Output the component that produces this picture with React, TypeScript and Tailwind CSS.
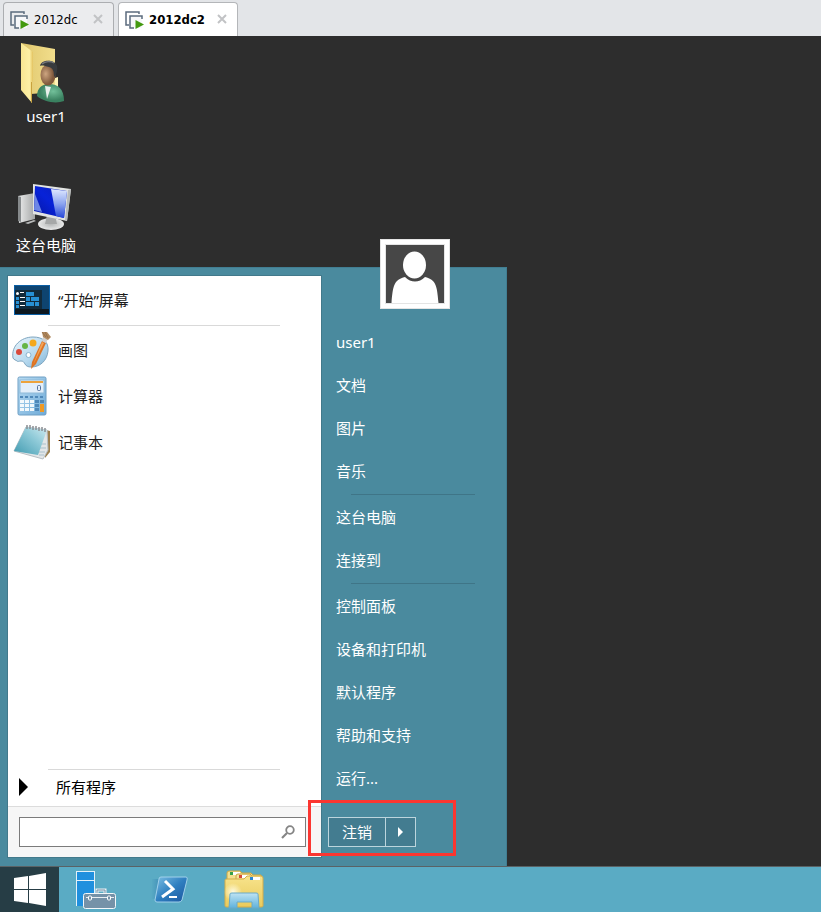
import type { ReactNode } from "react";

const UI = "font-['Noto_Sans','Noto_Sans_CJK_SC',sans-serif]";

function VmIcon() {
  return (
    <svg width="20" height="18" viewBox="0 0 20 18" fill="none">
      <path d="M4 14H1V1h13v2" stroke="#5b6b7d" strokeWidth="1.500" />
      <rect x="5" y="5" width="12" height="12" fill="#f7f8fa" />
      <path d="M9 17H5V5h12v3" stroke="#5b6b7d" strokeWidth="1.500" />
      <path d="M10.500 9v9l8.500-4.500z" fill="#43990f" />
    </svg>
  );
}

function Tab({ label, active }: { label: string; active?: boolean }) {
  return (
    <div
      className={
        active
          ? "flex w-[120px] items-center rounded-t border border-b-0 border-[#b4b6b9] bg-white pl-1.5 text-black"
          : "flex w-[111px] items-center rounded-t border border-b-0 border-[#acaeb1] bg-[#ebecee] pl-1.5 text-black"
      }
    >
      <button className="flex flex-1 items-center gap-1">
        <VmIcon />
        <span className={active ? "text-[13px] leading-4 font-bold" : "text-[13px] leading-4"}>{label}</span>
      </button>
      <button aria-label={"Close " + label} className="mr-2.5 mb-0.5 flex">
        <svg width="10" height="10" viewBox="0 0 10 10">
          <path d="M1 1l8 8M9 1l-8 8" stroke="#c2c3c5" strokeWidth="2" />
        </svg>
      </button>
    </div>
  );
}

function UserFolderIcon() {
  return (
    <svg width="50" height="62" viewBox="3 0 50 62">
      <defs>
        <linearGradient id="uf1" x1="0" x2="1">
          <stop offset="0" stopColor="#d8bf68" />
          <stop offset=".35" stopColor="#e6cf78" />
          <stop offset="1" stopColor="#f2de8c" />
        </linearGradient>
        <linearGradient id="uf2" x1="0" x2="1">
          <stop offset="0" stopColor="#f8e692" />
          <stop offset=".7" stopColor="#fdf0a6" />
          <stop offset="1" stopColor="#e3c25f" />
        </linearGradient>
        <radialGradient id="uf3" cx=".35" cy=".45">
          <stop offset="0" stopColor="#cda580" />
          <stop offset="1" stopColor="#80593c" />
        </radialGradient>
        <radialGradient id="uf4" cx=".6" cy=".4">
          <stop offset="0" stopColor="#72c09a" />
          <stop offset="1" stopColor="#3a8160" />
        </radialGradient>
      </defs>
      <path d="M3 1l34 6v43l-24 2z" fill="url(#uf1)" />
      <path d="M37 36l3-1v14h-3z" fill="#fff3b8" />
      <path d="M3 1l12 9v29l-1 1v21L3 48z" fill="url(#uf2)" />
      <path d="M13 40l1 0v21l-1-1z" fill="#c9a23e" />
      <path d="M19 54c0-8 5-12 12-12 9 0 15 5 15 17-8 3-20 1-27-5z" fill="url(#uf4)" />
      <path d="M27 44l6 1-4 12z" fill="#e8efec" />
      <ellipse cx="30" cy="33" rx="7.500" ry="10.500" fill="url(#uf3)" />
      <path d="M22 24c1-7 15-7 17 0 1 4-1 10-3 11 0-6-1-9-5-10-4-1-7-2-9-1z" fill="#383b3e" />
      <path d="M24 22c3-3 9-3 12-1" stroke="#777a7d" strokeWidth="1.500" fill="none" />
    </svg>
  );
}

function ComputerIcon() {
  return (
    <svg width="56" height="48" viewBox="1 0 56 48">
      <defs>
        <linearGradient id="pc1" x1="0" x2="1" y1="1" y2="0">
          <stop offset="0" stopColor="#0515a0" />
          <stop offset=".5" stopColor="#0722d8" />
          <stop offset="1" stopColor="#0a1fb8" />
        </linearGradient>
        <linearGradient id="pc2" x1="0" x2="0" y1="0" y2="1">
          <stop offset="0" stopColor="#dfe9ff" />
          <stop offset=".5" stopColor="#8ea6f0" />
          <stop offset="1" stopColor="#2546d8" />
        </linearGradient>
        <linearGradient id="pc3" x1="0" x2="1">
          <stop offset="0" stopColor="#eceded" />
          <stop offset="1" stopColor="#a4a6a6" />
        </linearGradient>
        <radialGradient id="pc4">
          <stop offset="0" stopColor="#b4b6b6" />
          <stop offset="1" stopColor="#e8e9e9" />
        </radialGradient>
      </defs>
      <path d="M1 13l17-3v26L2 40z" fill="url(#pc3)" />
      <path d="M1 13l3 1v25l-3-1z" fill="#868a8c" />
      <path d="M8 40l9-3 2 1-8 3z" fill="#b8baba" />
      <ellipse cx="34" cy="41" rx="13" ry="6" fill="url(#pc4)" />
      <path d="M28 41l2-9h8l2 9z" fill="#a6a8a8" />
      <path d="M16 1l38 5-4 32-34-7z" fill="#e2e4e2" />
      <path d="M51 7l3-1-4 32-2-1z" fill="#b7baba" />
      <path d="M18 3l32 5-3 27-30-7z" fill="url(#pc1)" />
      <path d="M34 6l16 2-3 27-8-2z" fill="url(#pc2)" />
      <path d="M18 11l7 18-8-2z" fill="#6d86e6" />
    </svg>
  );
}

function StartScreenIcon() {
  return (
    <svg width="36" height="30" viewBox="0 0 36 30">
      <rect width="36" height="30" fill="#0b5fa5" />
      <rect x="1" y="1" width="34" height="28" fill="#0e4470" />
      <rect x="1" y="5" width="27" height="20" fill="#122b3c" />
      <rect x="1" y="24" width="34" height="5" fill="#0d1820" />
      <circle cx="3.500" cy="8.500" r="1.500" fill="#fff" />
      <path d="M2 12h3v3H2zM2 16h3v3H2zM2 20h3v3H2zM12 7h8v4h-8zM12 12h4v4h-4zM17 12h8v4h-8zM12 17h8v4h-8zM21 17h4v4h-4z" fill="#2790d4" />
      <path d="M6 7h4v1H6zM6 12h5v1H6zM6 16h5v1H6zM6 20h5v1H6z" fill="#fff" />
    </svg>
  );
}

function PaintIcon() {
  return (
    <svg width="40" height="38" viewBox="0 0 40 38">
      <defs>
        <linearGradient id="pa1" x1="0" x2="1" y1="0" y2="1">
          <stop offset="0" stopColor="#eaf5fc" />
          <stop offset=".6" stopColor="#b5d8ee" />
          <stop offset="1" stopColor="#80b4d6" />
        </linearGradient>
      </defs>
      <path d="M1 27C-1 15 9 6 21 6c10 0 16 5 15 14-1 10-8 16-17 16-3 0-5-1-6-3s-2-3-4-3-3 1-4 0-3-1-4-3z" fill="url(#pa1)" stroke="#7fa6c0" />
      <circle cx="16.500" cy="24" r="2.500" fill="#fff" stroke="#8ab4cf" />
      <circle cx="7" cy="21" r="3" fill="#d94a3d" />
      <circle cx="13" cy="15" r="3" fill="#65b545" />
      <circle cx="21" cy="12" r="3.500" fill="#f5a81c" />
      <path d="M30 10l4 2-10 21-5 5 1-7z" fill="#dd7424" />
      <path d="M30 11l2 1-11 22z" fill="#f3a356" />
      <path d="M30 10l1-4 5 2-2 4z" fill="#cfd0d0" />
      <path d="M30 1l5 0 4 5-3 3-5-3z" fill="#b18a60" />
      <path d="M30 1l4 5M33 1l3 6" stroke="#8b6540" strokeWidth=".7" />
    </svg>
  );
}

function CalculatorIcon() {
  const keys = [0, 1, 2, 3, 4];
  return (
    <svg width="30" height="40" viewBox="0 0 30 40">
      <defs>
        <linearGradient id="ca1" x1="0" x2="1" y1="0" y2="1">
          <stop offset="0" stopColor="#b8dbf2" />
          <stop offset="1" stopColor="#6fabd8" />
        </linearGradient>
      </defs>
      <rect x="1" y="1" width="28" height="38" rx="1.500" fill="url(#ca1)" stroke="#6f9fc4" />
      <rect x="3" y="4" width="24" height="13" fill="#e3effa" stroke="#8db9d8" />
      <rect x="4" y="5" width="22" height="2" fill="#eda33b" />
      <rect x="20.500" y="9.500" width="3" height="5" rx="1" fill="none" stroke="#55719c" />
      {keys.map((k) => (
        <g key={k}>
          <rect x={3 + k * 5} y="20" width="3" height="2" fill="#4f88b8" />
          <rect x={3 + k * 5} y="24" width="4" height="3" fill={k < 3 ? "#f2f8fc" : "#4f88b8"} />
          <rect x={3 + k * 5} y="28" width="4" height="3" fill={k < 3 ? "#f2f8fc" : "#4f88b8"} />
          <rect x={3 + k * 5} y="32" width="4" height="3" fill={k < 3 ? "#f2f8fc" : "#4f88b8"} />
        </g>
      ))}
      <rect x="23" y="28" width="4" height="8" fill="#f09a24" />
    </svg>
  );
}

function NotepadIcon() {
  return (
    <svg width="38" height="36" viewBox="0 0 38 36">
      <defs>
        <linearGradient id="no1" x1="0" x2="1" y1="1" y2="0">
          <stop offset="0" stopColor="#3f9ab0" />
          <stop offset=".6" stopColor="#8fcad8" />
          <stop offset="1" stopColor="#cfeaf0" />
        </linearGradient>
      </defs>
      <path d="M33 6l4 1v21l-5 6z" fill="#9c8050" />
      <path d="M13 3l21 3 1 20-5 9L1 27z" fill="#e2e6e8" stroke="#b8bfc4" />
      <path d="M28 20l5 0M27 24l6 0M26 28l6 0M26 31l5 0" stroke="#a9c0cc" />
      <path d="M13 3l21 3-9 25L1 27z" fill="url(#no1)" />
      <path d="M14 1v4M17 1v4M20 2v4M23 2v4M26 3v4M29 3v4M32 4v4" stroke="#8a8f94" strokeWidth="1.500" />
    </svg>
  );
}

function ServerManagerIcon() {
  return (
    <svg width="40" height="40" viewBox="0 0 40 40">
      <path d="M0 1h19v35H0z" fill="#e4f1f8" />
      <path d="M1 2h17v8H1zM1 11h17v25H1z" fill="#2090de" />
      <path d="M21 24v-4h8v4" fill="none" stroke="#e9f0f4" strokeWidth="3" />
      <path d="M21 24v-4h8v4" fill="none" stroke="#7592a8" />
      <rect x="7.500" y="23.500" width="32" height="15" rx="2" fill="#7592a8" stroke="#f3f7f9" />
      <path d="M10 27.500h28" stroke="#e8eef2" />
      <rect x="12.500" y="26" width="3" height="4" rx="1" fill="#7592a8" stroke="#fff" />
      <rect x="31.500" y="26" width="3" height="4" rx="1" fill="#7592a8" stroke="#fff" />
    </svg>
  );
}

function PowerShellIcon() {
  return (
    <svg width="38" height="28" viewBox="0 0 38 28">
      <defs>
        <linearGradient id="ps1" x1="0" x2="1" y1="0" y2="1">
          <stop offset="0" stopColor="#7cc0e4" />
          <stop offset=".5" stopColor="#2f7fc0" />
          <stop offset="1" stopColor="#1c559e" />
        </linearGradient>
        <linearGradient id="ps2" x1="0" x2="1">
          <stop offset="0" stopColor="#3f8fb8" stopOpacity="0" />
          <stop offset="1" stopColor="#3a86b4" />
        </linearGradient>
      </defs>
      <path d="M1 3h10L7 23H0z" fill="url(#ps2)" />
      <path d="M10 1h25q2 0 1 3l-5 20q-1 2-3 2H6q-2 0-2-2L8 3q0-2 2-2z" fill="url(#ps1)" stroke="#9fd0ea" />
      <path d="M14 5l8 8-11 8" fill="none" stroke="#fff" strokeWidth="3" />
      <path d="M18 21h8" stroke="#fff" strokeWidth="2" />
    </svg>
  );
}

function ExplorerIcon() {
  return (
    <svg width="40" height="40" viewBox="0 0 40 40">
      <defs>
        <linearGradient id="ex1" x1="0" x2="0" y1="0" y2="1">
          <stop offset="0" stopColor="#f7e38c" />
          <stop offset="1" stopColor="#eacb5c" />
        </linearGradient>
        <radialGradient id="ex2">
          <stop offset="0" stopColor="#fffbe0" />
          <stop offset="1" stopColor="#fffbe0" stopOpacity="0" />
        </radialGradient>
        <linearGradient id="ex3" x1="0" x2="0" y1="0" y2="1">
          <stop offset="0" stopColor="#bfe3f3" />
          <stop offset="1" stopColor="#5fb2dc" />
        </linearGradient>
      </defs>
      <path d="M3 10V3q0-2 2-2h11l2 2h9l2 2h8l1 5z" fill="#f3df8e" stroke="#c9a445" />
      <path d="M6 2h10v3H6z" fill="#fff" />
      <path d="M6 2h3v3H6z" fill="#35a14a" />
      <path d="M12 10V6q0-2 2-2h12l2 2v4z" fill="#f6e498" stroke="#c9a445" />
      <path d="M15 5h10v3H15z" fill="#fff" />
      <path d="M15 5h3v3h-3z" fill="#d64b38" />
      <path d="M1 10q0-1 2-1h17l3-3h14q2 0 2 2v28q0 1-2 1H3q-2 0-2-1z" fill="url(#ex1)" stroke="#d3ad4a" />
      <path d="M26 7h10v3H26z" fill="#fff" />
      <path d="M26 7h3v3h-3z" fill="#2a86d1" />
      <circle cx="9" cy="22" r="9" fill="url(#ex2)" />
      <path d="M6 24q0-1 2-1h24q2 0 2 1l1 14h-7v-6H13v6H5z" fill="url(#ex3)" stroke="#6aaac8" />
    </svg>
  );
}

function ProgramRow({ icon, children }: { icon: ReactNode; children: ReactNode }) {
  return (
    <button className="flex h-[46px] w-full items-center gap-1.5 pl-1 text-left">
      <span className="flex w-10 justify-center">{icon}</span>
      <span>{children}</span>
    </button>
  );
}

function PlaceGroup({ items }: { items: string[] }) {
  return (
    <ul>
      {items.map((item) => (
        <li key={item}>
          <button className="flex h-[43px] w-full items-center text-left">{item}</button>
        </li>
      ))}
    </ul>
  );
}

function StartMenu() {
  return (
    <section className="relative mt-auto flex h-[599px] w-[507px] border border-b-0 border-l-0 border-[#417e92] bg-[#4a8a9e] pt-2 pb-[9px] pl-2 text-[15px] leading-5">
      <div className="flex w-[313px] flex-col bg-white text-[#1c1c1c] outline outline-[#42798b]">
        <div className="pt-px pb-0.5">
          <ProgramRow icon={<StartScreenIcon />}>“开始”屏幕</ProgramRow>
        </div>
        <hr className="mr-[41px] mb-px ml-10 border-[#d9d9d9]" />
        <ProgramRow icon={<PaintIcon />}>画图</ProgramRow>
        <ProgramRow icon={<CalculatorIcon />}>计算器</ProgramRow>
        <ProgramRow icon={<NotepadIcon />}>记事本</ProgramRow>
        <hr className="mt-auto mr-[41px] ml-10 border-[#d9d9d9]" />
        <button className="flex h-9 items-center gap-7 pb-0.5 pl-[11px] text-left text-black">
          <svg width="9" height="18" viewBox="0 0 9 18">
            <path d="M0 0l9 9-9 9z" />
          </svg>
          所有程序
        </button>
        <div className="flex h-[51px] items-center border-t border-[#dcdcdc] bg-[#f6f6f6] pr-[15px] pl-[11px]">
          <label className="flex h-[30px] flex-1 items-center border border-[#7b7b7b] bg-white pr-2.5">
            <input aria-label="Search" className="min-w-0 flex-1 px-2 outline-none" />
            <svg width="14" height="14" viewBox="0 0 14 14" fill="none" stroke="#858585">
              <circle cx="9" cy="5" r="3.800" strokeWidth="1.800" />
              <path d="M6 8l-5 5" strokeWidth="2.200" />
            </svg>
          </label>
        </div>
      </div>

      <div className="flex flex-1 flex-col pt-11 pl-[15px] text-white">
        <PlaceGroup items={["user1", "文档", "图片", "音乐"]} />
        <hr className="mt-0.5 mr-[31px] ml-[15px] border-[#3f7587]" />
        <PlaceGroup items={["这台电脑", "连接到"]} />
        <hr className="mt-0.5 mr-[31px] ml-[15px] border-[#3f7587]" />
        <PlaceGroup items={["控制面板", "设备和打印机", "默认程序", "帮助和支持", "运行..."]} />
        <div className="mt-auto mb-2.5 -ml-2 flex h-[30px] w-[88px] border border-[#bcd5dd] bg-[#437c90]">
          <button className="w-[57px] border-r border-[#bcd5dd]">注销</button>
          <button aria-label="More" className="flex flex-1 items-center justify-center">
            <svg width="5" height="10" viewBox="0 0 5 10">
              <path d="M0 0l5 5-5 5z" fill="#fff" />
            </svg>
          </button>
        </div>
      </div>

      <div className="absolute -top-[29px] left-[380px] size-[70px] border border-[#e4e4e4] bg-white p-1">
        <svg className="size-full border border-[#e4e4e4]" viewBox="0 0 58 58">
          <rect width="58" height="58" fill="#474747" />
          <ellipse cx="28.500" cy="20" rx="11.500" ry="13.500" fill="#fff" />
          <path d="M5.500 58C7 40 8 35 19 32c6 6 14 6 20 0 11 3 12 8 13.500 26z" fill="#fff" />
        </svg>
      </div>
      <div className="pointer-events-none absolute right-[50px] bottom-2.5 h-14 w-[148px] border-[3px] border-[#fb3631]" />
    </section>
  );
}

export default function App() {
  return (
    <div className={UI + " flex min-h-screen flex-col bg-[#2d2d2d]"}>
      <nav className="flex h-9 gap-1 bg-[#e3e5e8] pt-0.5 pl-[3px] font-['DejaVu_Sans_Condensed','Noto_Sans',sans-serif]">
        <Tab label="2012dc" />
        <Tab label="2012dc2" active />
      </nav>
      <main className="flex flex-1 flex-col">
        <div className="flex flex-col items-start gap-[57px] pt-1.5 pb-3 text-[15px] leading-5 text-white">
          <button className="flex w-[92px] flex-col items-center gap-0.5">
            <UserFolderIcon />
            user1
          </button>
          <button className="flex w-[92px] flex-col items-center gap-1">
            <ComputerIcon />
            这台电脑
          </button>
        </div>
        <StartMenu />
      </main>
      <footer className="flex h-[46px] items-center border-t border-[#5a6265] bg-[#5aabc4]">
        <button aria-label="Start" className="flex h-full w-[59px] items-center justify-center bg-[#263d45]">
          <svg width="32" height="34" viewBox="0 0 32 34" fill="#fff">
            <path d="M0 5l14-2v13H0zM15 3l17-3v16H15zM0 17h14v13L0 28zM15 17h17v16l-17-3z" />
          </svg>
        </button>
        <button aria-label="Server Manager" className="ml-[17px]">
          <ServerManagerIcon />
        </button>
        <button aria-label="PowerShell" className="ml-[35px]">
          <PowerShellIcon />
        </button>
        <button aria-label="File Explorer" className="ml-[35px]">
          <ExplorerIcon />
        </button>
      </footer>
    </div>
  );
}
